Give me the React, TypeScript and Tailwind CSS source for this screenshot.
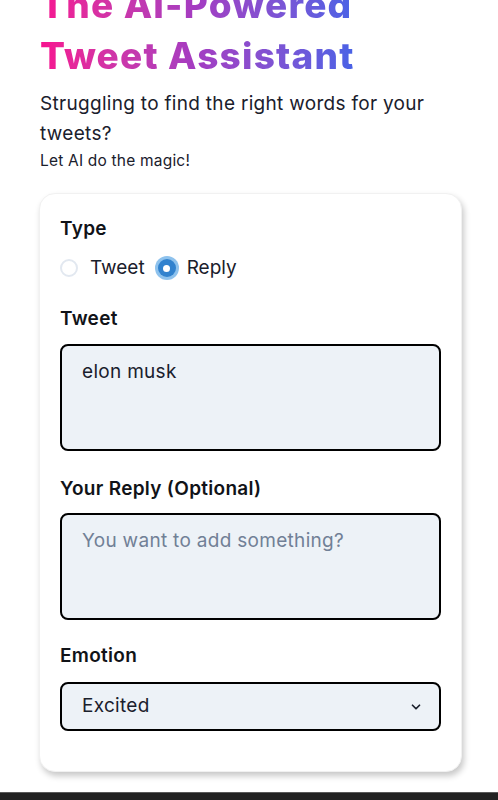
import React from "react";

const Label = ({ children, className }: { children: React.ReactNode; className?: string }) => (
  <div className={["text-[19px] leading-[27px] font-semibold tracking-[0.3px] text-[#111318]", className].join(" ")}>{children}</div>
);

const App: React.FC = () => {
  return (
    <div className="flex flex-col h-[800px] w-full overflow-hidden bg-white font-['Inter',sans-serif]">
      <div className="flex-1 overflow-hidden flex flex-col pl-[40px]">
        <h1 className="-mt-[21px] w-fit text-[37px] leading-[51px] font-extrabold tracking-[1.2px] bg-gradient-to-r from-[#f7108f] via-[#a33cc2] to-[#4762e6] bg-clip-text text-transparent">
          The AI-Powered
          <br />
          Tweet Assistant
        </h1>
        <p className="mt-[8px] text-[19px] leading-[30px] tracking-[0.3px] text-[#1a202c] pr-[30px]">
          Struggling to find the right words for your tweets?
        </p>
        <p className="text-[15.5px] leading-[24px] tracking-[0.2px] text-[#1a202c]">Let AI do the magic!</p>

        <div className="mt-[20px] ml-[-1px] w-[423px] rounded-[16px] bg-white shadow-[2px_4px_6px_rgba(0,0,0,0.22)] border border-[#f1f1f1] px-[20px] pt-[21px] pb-[40px] flex flex-col">
          <Label>Type</Label>
          <div className="mt-[14px] h-[24px] flex items-center text-[19px] text-[#1a202c]">
            <span className="w-[18px] h-[18px] rounded-full border-2 border-[#e2e8f0] bg-white" />
            <span className="ml-[12px]">Tweet</span>
            <span className="ml-[13px] w-[18px] h-[18px] rounded-full bg-[#3182ce] flex items-center justify-center shadow-[0_0_0_3px_rgba(66,153,225,0.6)]">
              <span className="w-[7px] h-[7px] rounded-full bg-white" />
            </span>
            <span className="ml-[11px]">Reply</span>
          </div>

          <Label className="mt-[25px]">Tweet</Label>
          <textarea
            className="mt-[12px] h-[107px] w-full resize-none rounded-[8px] border-2 border-black bg-[#edf2f7] pl-[20px] pr-[16px] pt-[12px] text-[19px] leading-[28px] tracking-[0.3px] text-[#1a202c] outline-none"
            defaultValue="elon musk"
          />

          <Label className="mt-[24px]">Your Reply (Optional)</Label>
          <textarea
            className="mt-[11px] h-[107px] w-full resize-none rounded-[8px] border-2 border-black bg-[#edf2f7] pl-[20px] pr-[16px] pt-[12px] text-[19px] leading-[28px] tracking-[0.3px] text-[#1a202c] placeholder:text-[#718096] outline-none"
            placeholder="You want to add something?"
          />

          <Label className="mt-[22px]">Emotion</Label>
          <div className="mt-[13px] h-[49px] w-full rounded-[8px] border-2 border-black bg-[#edf2f7] pl-[20px] pr-[16px] flex items-center justify-between text-[19px] tracking-[0.3px] text-[#1a202c]">
            <span>Excited</span>
            <svg width="14" height="14" viewBox="0 0 24 24" fill="none" stroke="#1a202c" strokeWidth="3" strokeLinecap="round" strokeLinejoin="round">
              <path d="M6 9l6 6 6-6" />
            </svg>
          </div>
        </div>
      </div>
      <div className="h-[8px] bg-[#222222] border-t border-[#5a5a5a]" />
    </div>
  );
};

export default App;
